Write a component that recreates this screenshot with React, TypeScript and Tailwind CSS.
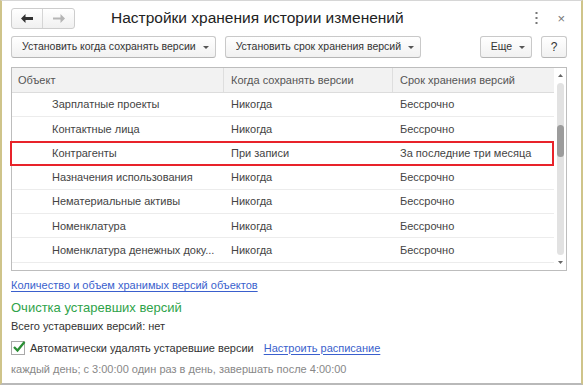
const rows = [
  { name: "Зарплатные проекты", when: "Никогда", term: "Бессрочно" },
  { name: "Контактные лица", when: "Никогда", term: "Бессрочно" },
  { name: "Контрагенты", when: "При записи", term: "За последние три месяца", selected: true },
  { name: "Назначения использования", when: "Никогда", term: "Бессрочно" },
  { name: "Нематериальные активы", when: "Никогда", term: "Бессрочно" },
  { name: "Номенклатура", when: "Никогда", term: "Бессрочно" },
  { name: "Номенклатура денежных доку...", when: "Никогда", term: "Бессрочно" },
];

const Caret = () => (
  <svg width="6" height="3" viewBox="0 0 6 3" className="ml-[7px]">
    <path d="M0 0h6L3 3z" fill="#555" />
  </svg>
);

const ToolButton = ({ label, className = "" }: { label: string; className?: string }) => (
  <button
    className={
      "h-[22px] flex items-center whitespace-nowrap pl-[10px] pr-[6px] rounded-[3px] border border-[#c9c9c9] border-b-[#b5b5b5] bg-gradient-to-b from-white to-[#f1f1f1] text-[#333] text-[10.5px] " +
      className
    }
  >
    {label}
    <Caret />
  </button>
);

const App = () => {
  return (
    <div
      className="w-[583px] h-[385px] bg-white border-l-2 border-r-2 border-[#cfc48a] border-t border-t-[#d6d6d6] border-b-2 border-b-[#b9b9b9] overflow-hidden text-[#333]"
      style={{ fontFamily: "'Liberation Sans', Arial, sans-serif" }}
    >
      <div className="pl-[9px] pr-[14px]">
        {/* title bar */}
        <div className="flex items-center h-[34px]">
          <div className="flex h-[21px] rounded-[3px] border border-[#cdcdcd] bg-gradient-to-b from-white to-[#f0f0f0]">
            <div className="w-[31px] flex items-center justify-center border-r border-[#d5d5d5]">
              <svg width="12" height="9" viewBox="0 0 12 9">
                <path d="M0 4.5L4.5 0v3H12v3H4.5v3z" fill="#333" />
              </svg>
            </div>
            <div className="w-[31px] flex items-center justify-center">
              <svg width="12" height="9" viewBox="0 0 12 9">
                <path d="M12 4.5L7.5 0v3.5H0v2h7.5V9z" fill="#b5b5b5" />
              </svg>
            </div>
          </div>
          <div className="ml-[36px] text-[15.5px] text-[#222] whitespace-nowrap">
            Настройки хранения истории изменений
          </div>
          <div className="ml-auto flex items-center gap-[19px] mr-[2px]">
            <svg width="3" height="12" viewBox="0 0 3 12">
              <rect x="0.5" y="0" width="2" height="2" fill="#777" />
              <rect x="0.5" y="5" width="2" height="2" fill="#777" />
              <rect x="0.5" y="10" width="2" height="2" fill="#777" />
            </svg>
            <span className="text-[13px] text-[#777] leading-none">×</span>
          </div>
        </div>

        {/* toolbar */}
        <div className="flex items-center h-[22px] mt-[1px]">
          <ToolButton label="Установить когда сохранять версии" />
          <ToolButton label="Установить срок хранения версий" className="ml-[9px]" />
          <ToolButton label="Еще" className="ml-auto" />
          <button className="ml-[9px] h-[22px] w-[26px] rounded-[3px] border border-[#c9c9c9] border-b-[#b5b5b5] bg-gradient-to-b from-white to-[#f1f1f1] text-[12px] text-[#333] flex items-center justify-center">
            ?
          </button>
        </div>

        {/* table */}
        <div className="mt-[9px] h-[204px] border border-[#bdbdbd] flex text-[11px] text-[#444]">
          <div className="flex-1 flex flex-col">
            <div className="h-[25px] shrink-0 flex items-center bg-[#f2f2f2] border-b border-[#dcdcdc] text-[#555]">
              <div className="w-[212px] pl-[6px] border-r border-[#dedede] h-full flex items-center">Объект</div>
              <div className="w-[169px] pl-[7px] border-r border-[#dedede] h-full flex items-center">Когда сохранять версии</div>
              <div className="flex-1 pl-[7px]">Срок хранения версий</div>
            </div>
            {rows.map((r) =>
              r.selected ? (
                <div
                  key={r.name}
                  className="h-[25px] shrink-0 -mt-[1px] -ml-[2px] flex items-center border-2 border-[#e8232a]"
                >
                  <div className="w-[212px] pl-[40px] truncate">{r.name}</div>
                  <div className="w-[169px] pl-[7px]">{r.when}</div>
                  <div className="flex-1 pl-[7px]">{r.term}</div>
                </div>
              ) : (
                <div key={r.name} className="h-[24.3px] shrink-0 flex items-center border-b border-[#ececec]">
                  <div className="w-[212px] pl-[40px] truncate">{r.name}</div>
                  <div className="w-[169px] pl-[7px]">{r.when}</div>
                  <div className="flex-1 pl-[7px]">{r.term}</div>
                </div>
              )
            )}
          </div>
          {/* scrollbar */}
          <div className="w-[12px] flex flex-col items-center pt-[6px] pb-[6px]">
            <svg width="5" height="3" viewBox="0 0 5 3">
              <path d="M2.5 0L5 3H0z" fill="#666" />
            </svg>
            <div className="mt-[6px] flex-1 w-[7px] rounded-[4px] bg-[#e2e2e2] flex flex-col">
              <div className="h-[42px]" />
              <div className="h-[32px] rounded-[4px] bg-[#9c9c9c]" />
            </div>
            <svg width="5" height="3" viewBox="0 0 5 3" className="mt-[6px]">
              <path d="M0 0h5L2.5 3z" fill="#666" />
            </svg>
          </div>
        </div>

        {/* bottom */}
        <div className="mt-[8px] text-[11px] leading-[13px]">
          <a className="text-[#3a5fcd] underline underline-offset-2">Количество и объем хранимых версий объектов</a>
        </div>
        <div className="mt-[8px] text-[13px] text-[#2fa34a] leading-[16px]">Очистка устаревших версий</div>
        <div className="mt-[4px] text-[11px] leading-[13px] text-[#333]">Всего устаревших версий: нет</div>
        <div className="mt-[8px] flex items-center text-[11px] leading-[13px]">
          <div className="relative w-[14px] h-[14px] border border-[#a9a9a9] bg-white">
            <svg width="14" height="13" viewBox="0 0 14 13" className="absolute left-[0px] -top-[2px]">
              <path d="M2 7l3.5 3.5L12.5 2" stroke="#2a8f35" strokeWidth="2.3" fill="none" />
            </svg>
          </div>
          <span className="ml-[5px] text-[#333]">Автоматически удалять устаревшие версии</span>
          <a className="ml-[10px] text-[#3a5fcd] underline underline-offset-2">Настроить расписание</a>
        </div>
        <div className="mt-[8px] text-[11px] leading-[13px] text-[#888]">каждый день; с 3:00:00 один раз в день, завершать после 4:00:00</div>
      </div>
    </div>
  );
};

export default App;
